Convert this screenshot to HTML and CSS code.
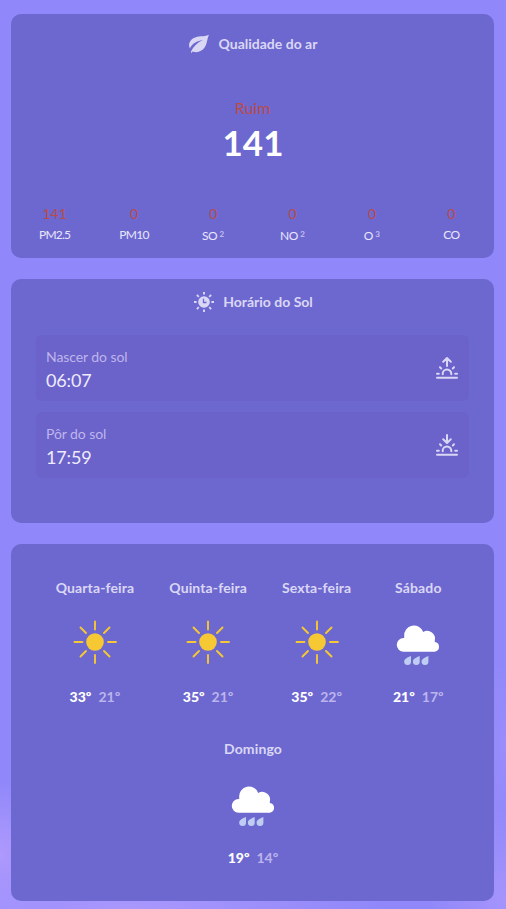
FILE: index.html
```html
<!DOCTYPE html>
<html lang="pt-BR">
<head>
<meta charset="utf-8">
<meta name="viewport" content="width=device-width, initial-scale=1">
<title>Clima</title>
<link rel="stylesheet" href="styles.css">
</head>
<body>
<svg class="defs" width="0" height="0" aria-hidden="true">
  <symbol id="sunny" viewBox="0 0 64 64">
    <circle cx="32" cy="32" r="8.800" fill="#f6c833"/>
    <path d="M32 11.500v8M32 45v8M11.500 32h8M45 32h8M17.500 17.500l5.500 5.500M41 41l5.500 5.500M17.500 46.500l5.500-5.500M41 23l5.500-5.500" stroke="#f6c833" stroke-width="1.900" stroke-linecap="round"/>
  </symbol>
  <symbol id="rain" viewBox="0 0 64 64">
    <g transform="translate(.3 1.300)">
      <path d="M17.300 40.400a6.800 6.800 0 0 1 0-13.700h.6v-1.900a9.800 9.800 0 0 1 19-4.100a7.900 7.900 0 0 1 11.600 8.800v1.100a4.950 4.950 0 0 1 0 9.800z" fill="#fff"/>
      <path id="drop" d="M24.700 44.700v5.800a3.400 3.400 0 1 1-6.800-.3c0-2.600 3.500-4.200 6.800-5.500z" fill="#bfcdf3"/>
      <use href="#drop" x="8.700"/>
      <use href="#drop" x="17.400"/>
    </g>
  </symbol>
</svg>
<main class="page">
  <section class="card air">
    <h2 class="title">
      <svg width="22" height="20" viewBox="0 0 22 20" fill="currentColor">
        <path d="M21 .7C15.500 3.200 10.500 1.200 5.300 4.300C1.200 6.700.2 11.200 1.900 14.300C4 9.500 9 6.700 15 5.900C9.500 8.400 5.500 12 3 17.500L3.300 19.200L4.600 17.500C9 19.200 14 17.500 16.600 13.600C19.300 9.500 19 4.500 21 .7z"/>
      </svg>
      <span>Qualidade do ar</span>
    </h2>
    <div class="index">
      <p class="level">Ruim</p>
      <p class="value">141</p>
    </div>
    <ul class="pollutants">
      <li><span class="amount">141</span><span class="name">PM2.5</span></li>
      <li><span class="amount">0</span><span class="name">PM10</span></li>
      <li><span class="amount">0</span><span class="name low">SO <sup>2</sup></span></li>
      <li><span class="amount">0</span><span class="name low">NO <sup>2</sup></span></li>
      <li><span class="amount">0</span><span class="name low">O <sup>3</sup></span></li>
      <li><span class="amount">0</span><span class="name">CO</span></li>
    </ul>
  </section>

  <section class="card sun">
    <h2 class="title">
      <svg width="20" height="20" viewBox="0 0 20 20" fill="none" stroke="currentColor" stroke-width="1.900">
        <circle cx="10" cy="10" r="5.800" fill="currentColor" stroke="none"/>
        <path d="M10 0v2.600M10 17.400V20M0 10h2.600M17.400 10H20M2.900 2.900l1.900 1.900M15.200 15.200l1.900 1.900M2.900 17.100l1.900-1.900M15.200 4.800l1.900-1.900"/>
        <path d="M9.500 6.800v3.700h3" stroke="#6d68cf" stroke-width="1.300"/>
      </svg>
      <span>Horário do Sol</span>
    </h2>
    <div class="time-row">
      <div><p class="label">Nascer do sol</p><p class="time">06:07</p></div>
      <svg class="horizon" width="22" height="22" viewBox="0 0 22 22">
        <path d="M1 20.700h20M1 16.800h1.800M19.200 16.800H21M4 10.300l1.200 1.200M18 10.300l-1.200 1.200M6.700 17.300v-.5a4.300 4.300 0 0 1 8.600 0v.5M11 9V1.200M7.200 4.700L11 1.100l3.800 3.600"/>
      </svg>
    </div>
    <div class="time-row">
      <div><p class="label">Pôr do sol</p><p class="time">17:59</p></div>
      <svg class="horizon" width="22" height="22" viewBox="0 0 22 22">
        <path d="M1 20.700h20M1 16.800h1.800M19.200 16.800H21M4 10.300l1.200 1.200M18 10.300l-1.200 1.200M6.700 17.300v-.5a4.300 4.300 0 0 1 8.600 0v.5M11 1v7.800M7.200 5.300L11 8.900l3.800-3.600"/>
      </svg>
    </div>
  </section>

  <section class="card forecast">
    <article class="day"><h3>Quarta-feira</h3><svg width="64" height="64"><use href="#sunny"/></svg><p><b>33º</b><span>21º</span></p></article>
    <article class="day"><h3>Quinta-feira</h3><svg width="64" height="64"><use href="#sunny"/></svg><p><b>35º</b><span>21º</span></p></article>
    <article class="day"><h3>Sexta-feira</h3><svg width="64" height="64"><use href="#sunny"/></svg><p><b>35º</b><span>22º</span></p></article>
    <article class="day"><h3>Sábado</h3><svg width="64" height="64"><use href="#rain"/></svg><p><b>21º</b><span>17º</span></p></article>
    <article class="day"><h3>Domingo</h3><svg width="64" height="64"><use href="#rain"/></svg><p><b>19º</b><span>14º</span></p></article>
  </section>
</main>
</body>
</html>
```
FILE: styles.css
```css
* {
  box-sizing: border-box;
  margin: 0;
  padding: 0;
}

body {
  min-height: 909px;
  font-family: Lato, "Liberation Sans", sans-serif;
  font-size: 14px;
  line-height: 17px;
  color: #dad7f5;
  background:
    radial-gradient(ellipse 70px 75px at 0 855px, #af9afd, transparent),
    radial-gradient(ellipse 260px 45px at 130px 909px, #aa98fd, transparent),
    radial-gradient(ellipse 80px 100px at 506px 900px, #a594fc, transparent),
    radial-gradient(ellipse 30px 90px at 506px 745px, #9a8dfc, transparent),
    #8f87fa;
}

.defs {
  position: absolute;
}

.page {
  display: flex;
  flex-direction: column;
  gap: 21px;
  padding: 14px 12px 8px 11px;
}

.card {
  height: 244px;
  border-radius: 10px;
  background: #6d68cf;
}

.title {
  display: flex;
  align-items: center;
  justify-content: center;
  gap: 9px;
  height: 20px;
  font-size: 14px;
  font-weight: 700;
}

.title span {
  padding-bottom: 2px;
}

.air {
  display: flex;
  flex-direction: column;
  padding: 20px 3px 13px 4px;
}

.air .title {
  padding-right: 1px;
}

.index {
  margin-top: 44px;
  padding-right: 1px;
  text-align: center;
}

.level {
  font-size: 16px;
  line-height: 20px;
  color: #b84b4b;
}

.value {
  margin-top: 2px;
  padding-left: 1px;
  font-size: 35px;
  font-weight: 700;
  line-height: 44px;
  color: #fff;
}

.pollutants {
  display: grid;
  grid-template-columns: repeat(6, 1fr);
  margin-top: 41px;
  list-style: none;
  text-align: center;
}

.pollutants li {
  display: flex;
  flex-direction: column;
  gap: 5px;
}

.amount {
  color: #b84b4b;
}

.name {
  font-size: 12px;
  line-height: 15px;
  letter-spacing: -0.75px;
  color: #e9e6fc;
}

.low {
  padding-top: 1px;
  padding-right: 1px;
  letter-spacing: -0.6px;
}

.name sup {
  font-size: 8px;
  font-weight: 700;
  line-height: 0;
  vertical-align: 3px;
  color: #c5bff0;
}

.sun {
  padding: 13px 25px 0;
}

.sun .title {
  margin-bottom: 23px;
  padding-left: 2px;
}

.time-row {
  display: flex;
  align-items: center;
  justify-content: space-between;
  height: 66px;
  margin-bottom: 11px;
  padding: 0 11px 0 10px;
  border-radius: 6px;
  background: #6b62ca;
}

.label {
  margin-top: 2px;
  letter-spacing: -0.07px;
  color: #beb6ec;
}

.time {
  margin-top: 4px;
  font-size: 18px;
  line-height: 22px;
  letter-spacing: -0.15px;
  color: #eeecfc;
}

.horizon {
  fill: none;
  stroke: #dad7f5;
  stroke-width: 2;
  stroke-linecap: round;
  stroke-linejoin: round;
}

.forecast {
  display: flex;
  flex-wrap: wrap;
  align-content: flex-start;
  justify-content: center;
  gap: 35px;
  height: 357px;
  padding: 35px 29px 0 30px;
}

.day {
  display: flex;
  flex-direction: column;
  align-items: center;
  height: 126px;
}

.day svg {
  flex: none;
}

.day h3 {
  margin-bottom: 14px;
  font-size: 14px;
  font-weight: 700;
  letter-spacing: 0.13px;
}

.day p {
  display: flex;
  gap: 7px;
  margin-top: 14px;
  font-weight: 700;
  color: #bcb5ed;
}

.day b {
  font-weight: 900;
  color: #fff;
}
```
